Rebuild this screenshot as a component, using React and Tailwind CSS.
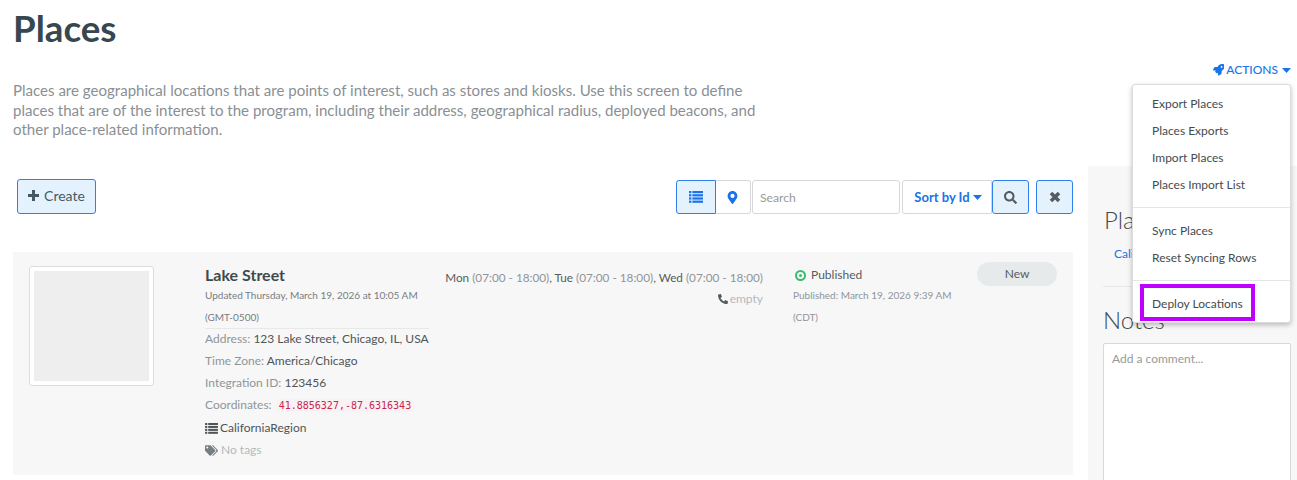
import React from "react";
import { FaRocket, FaMapMarkerAlt, FaSearch, FaPhone, FaTags } from "react-icons/fa";

function Caret({ className }) {
  return (
    <svg width="9" height="5" viewBox="0 0 9 5" className={className} fill="currentColor">
      <polygon points="0,0 9,0 4.5,5" />
    </svg>
  );
}

function ListIcon({ className, width = 14, height = 12 }) {
  return (
    <svg width={width} height={height} viewBox="0 0 14 12" className={className} fill="currentColor">
      {[0, 3.2, 6.4, 9.6].map((y) => (
        <g key={y}>
          <rect x="0" y={y} width="2.4" height="2.2" />
          <rect x="3.4" y={y} width="10.6" height="2.2" />
        </g>
      ))}
    </svg>
  );
}

function PlusIcon() {
  return (
    <svg width="11" height="11" viewBox="0 0 11 11" fill="currentColor">
      <path d="M4 0h3v4h4v3H7v4H4V7H0V4h4z" />
    </svg>
  );
}

function TimesIcon() {
  return (
    <svg width="12" height="12" viewBox="0 0 12 12" stroke="currentColor" strokeWidth="3.6" fill="none">
      <path d="M2 2l8 8M10 2l-8 8" />
    </svg>
  );
}

function Field({ label, children }) {
  return (
    <div className="h-[22px] leading-[22px] text-[12px] text-[#4d5559]">
      <span className="text-[#8f9599]">{label}</span> {children}
    </div>
  );
}

function MenuItem({ children }) {
  return <div className="h-[27px] leading-[27px] pl-[19px] text-[12px] text-[#444b4f]">{children}</div>;
}

export default function App() {
  return (
    <div className="relative w-[1297px] h-[480px] overflow-hidden bg-white font-['Lato',sans-serif] text-[#3f4a4f]">
      <h1 className="pl-[13px] pt-[5px] h-[81px] text-[36.7px] leading-[46px] font-bold text-[#37474f]">Places</h1>

      <div className="flex justify-between h-[85px]">
        <p className="pl-[13px] w-[762px] text-[15.05px] leading-[19.5px] text-[#8a8f94]">
          Places are geographical locations that are points of interest, such as stores and kiosks. Use this screen to define places that are of the interest to the program, including their address, geographical radius, deployed beacons, and other place-related information.
        </p>
        <div className="pr-[6px]">
          <div className="flex items-center gap-[2px] mt-[-18px] h-[14px] text-[12px] leading-[14px] font-medium text-[#1a73e8]">
            <FaRocket className="text-[11.5px]" />
            <span>ACTIONS</span>
            <Caret className="ml-[2px]" />
          </div>
        </div>
      </div>

      <div className="flex">
        <div className="w-[1073px] pl-[13px]">
          <div className="flex justify-between pl-[4px] pt-[13px] h-[86px]">
            <button className="h-[35px] w-[79px] flex items-center justify-center gap-[5px] pb-[2px] rounded-[3px] border border-[#2f80ed] bg-[#e3f2fd] text-[14px] text-[#455a64]">
              <PlusIcon />
              Create
            </button>
            <div className="flex items-start mt-[1px]">
              <div className="flex h-[34px]">
                <div className="w-[40px] flex items-center justify-center rounded-l-[3px] border border-[#2f80ed] bg-[#e3f2fd] text-[#1a73e8]">
                  <ListIcon />
                </div>
                <div className="w-[35px] flex items-center justify-center rounded-r-[3px] border border-l-0 border-[#d8d8d8] bg-white text-[#1a73e8]">
                  <FaMapMarkerAlt className="text-[13px] -ml-[2px]" />
                </div>
              </div>
              <div className="ml-[1px] w-[148px] h-[34px] flex items-center rounded-[3px] border border-[#d8d8d8] px-[7px] pt-[2px] text-[12.2px] text-[#999]">Search</div>
              <div className="ml-[2px] w-[90px] h-[34px] flex items-center justify-center gap-[3px] pl-[2px] pt-[1px] rounded-l-[3px] border border-[#d8d8d8] text-[13px] font-bold text-[#1a73e8]">
                Sort by Id
                <Caret />
              </div>
              <div className="w-[37px] h-[34px] flex items-center justify-center rounded-[3px] border border-[#2f80ed] bg-[#e3f2fd] text-[#555c60]">
                <FaSearch className="text-[13px]" />
              </div>
              <div className="ml-[7px] w-[37px] h-[34px] flex items-center justify-center rounded-[3px] border border-[#2f80ed] bg-[#e3f2fd] text-[#555c60]">
                <TimesIcon />
              </div>
            </div>
          </div>

          <div className="flex h-[223px] rounded-[2px] bg-[#f7f7f7] pl-[16px] pt-[14px]">
            <div className="w-[125px] h-[120px] rounded-[3px] border border-[#dcdcdc] bg-white p-[4px] shrink-0">
              <div className="w-full h-full bg-[#eeeeee]" />
            </div>
            <div className="ml-[51px] w-[240px] shrink-0">
              <div className="text-[16px] leading-[18px] font-bold text-[#3f4a4f]">Lake Street</div>
              <div className="w-[224px] mb-[-1px] border-b border-[#e8e8e8] text-[10px] leading-[22px] text-[#777d81]">
                Updated Thursday, March 19, 2026 at 10:05 AM (GMT-0500)
              </div>
              <Field label="Address:">123 Lake Street, Chicago, IL, USA</Field>
              <Field label="Time Zone:">America/Chicago</Field>
              <Field label="Integration ID:">123456</Field>
              <Field label="Coordinates:">
                <code className="ml-[1px] px-[3px] py-[1px] rounded-[3px] bg-[#f9f2f4] font-['DejaVu_Sans_Mono',monospace] text-[10px] text-[#c7254e]">41.8856327,-87.6316343</code>
              </Field>
              <div className="h-[22px] mt-[1px] flex items-center gap-[2px] text-[12px] text-[#4d5559]">
                <ListIcon width={13} height={11} />
                CaliforniaRegion
              </div>
              <div className="h-[22px] flex items-center gap-[3px] text-[12px] text-[#b5b9bc]">
                <FaTags className="text-[13px] text-[#777d81]" />
                No tags
              </div>
            </div>
            <div className="w-[318px] shrink-0 pt-[1px] text-right whitespace-nowrap">
              <div className="text-[11.75px] leading-[21px] text-[#555c60]">
                Mon <span className="text-[#8f9599]">(07:00 - 18:00)</span>, Tue <span className="text-[#8f9599]">(07:00 - 18:00)</span>, Wed <span className="text-[#8f9599]">(07:00 - 18:00)</span>
              </div>
              <div className="flex items-center justify-end gap-[2px] text-[12px] leading-[22px] text-[#b5b9bc]">
                <FaPhone className="text-[10px] text-[#555c60] -scale-x-100" />
                empty
              </div>
            </div>
            <div className="ml-[30px] w-[184px] shrink-0">
              <div className="flex items-center gap-[5px] h-[18px] text-[12px] text-[#555c60]">
                <span className="ml-[2px] w-[11px] h-[11px] rounded-full border-2 border-[#3dba6f] flex items-center justify-center">
                  <span className="w-[3px] h-[3px] rounded-full bg-[#3dba6f]" />
                </span>
                Published
              </div>
              <div className="mt-[1px] text-[10px] leading-[21.5px] text-[#8f9599]">Published: March 19, 2026 9:39 AM (CDT)</div>
            </div>
            <div className="shrink-0 w-[80px] h-[24px] mt-[-4px] rounded-full bg-[#e7eaeb] text-center text-[12px] leading-[24px] text-[#555c60]">New</div>
          </div>
        </div>

        <div className="ml-[15px] w-[209px] h-[314px] bg-[#f7f7f7] pl-[15px] pr-[6px]">
          <div className="pl-[1px] mt-[40px] text-[24px] leading-[28px] font-light text-[#3f4a4f]">Places</div>
          <div className="mt-[12px] pl-[11px] text-[12px] leading-[16px] text-[#1a73e8]">CaliforniaRegion</div>
          <div className="mt-[24px] border-t border-[#e8e8e8]" />
          <div className="mt-[19px] text-[24px] leading-[28px] font-light text-[#3f4a4f]">Notes</div>
          <div className="mt-[9px] h-[200px] rounded-[2px] border border-[#d8d8d8] bg-white px-[8px] py-[7px] text-[12px] leading-[16px] text-[#999]">Add a comment...</div>
        </div>
      </div>

      <div className="absolute left-[1132px] top-[84px] w-[159px] h-[239px] rounded-[3px] border border-[#dcdcdc] bg-white shadow-[0_2px_5px_rgba(0,0,0,0.25)] pt-[5px]">
        <MenuItem>Export Places</MenuItem>
        <MenuItem>Places Exports</MenuItem>
        <MenuItem>Import Places</MenuItem>
        <MenuItem>Places Import List</MenuItem>
        <div className="my-[9px] border-t border-[#e5e5e5]" />
        <MenuItem>Sync Places</MenuItem>
        <MenuItem>Reset Syncing Rows</MenuItem>
        <div className="my-[9px] border-t border-[#e5e5e5]" />
        <MenuItem>Deploy Locations</MenuItem>
        <div className="absolute left-[7px] top-[199px] w-[115px] h-[37px] border-[4px] border-[#c000ff]" />
      </div>
    </div>
  );
}
